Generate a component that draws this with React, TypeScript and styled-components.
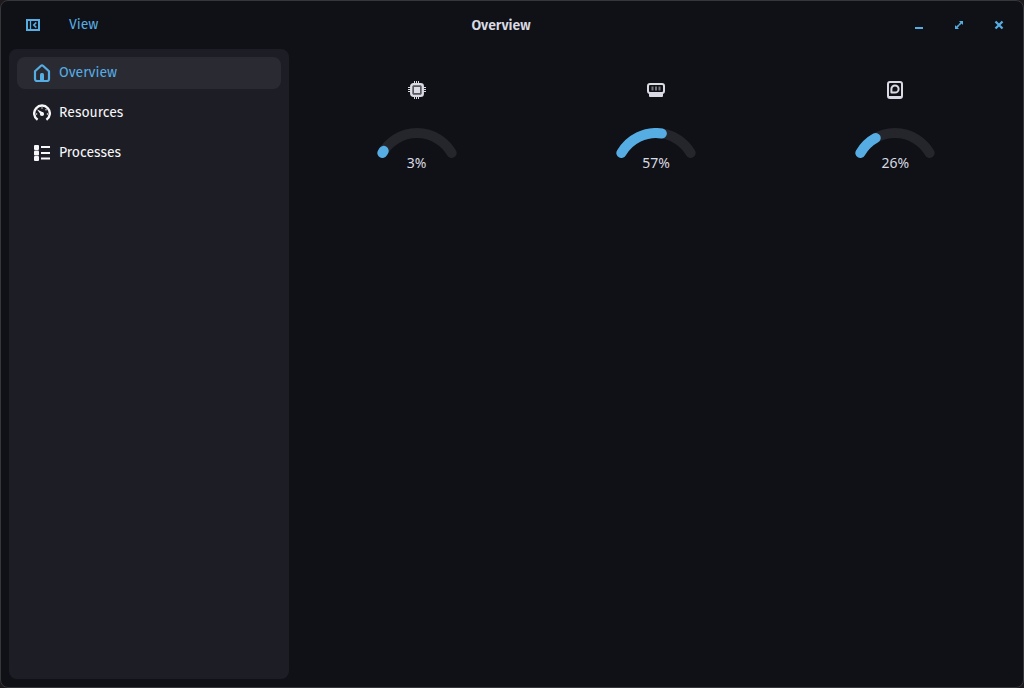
import React from "react";
import styled, { createGlobalStyle } from "styled-components";

const color = {
  accent: "#56ade3",
  window: "#101116",
  border: "#36373a",
  panel: "#1d1d25",
  active: "#2a2a33",
  track: "#25262b",
  text: "#d9dae3",
  bright: "#f7f7fa",
};

const GlobalStyle = createGlobalStyle`
  * { box-sizing: border-box; }
  html, body { margin: 0; background: #1c1a1d; }
  body { font: 14px/20px "Fira Sans", "Noto Sans", sans-serif; color: ${color.text}; }
  button { font: inherit; color: inherit; border: 0; padding: 0; background: none; cursor: pointer; }
  svg { display: block; }
`;

const Window = styled.div`
  min-height: 100vh;
  display: flex;
  flex-direction: column;
  background: ${color.window};
  border: 1px solid ${color.border};
  border-radius: 8px;
`;

const HeaderBar = styled.header`
  height: 48px;
  padding: 0 8px;
  display: grid;
  grid-template-columns: 1fr auto 1fr;
  align-items: center;
`;

const HeaderGroup = styled.div<{ $end?: boolean }>`
  display: flex;
  align-items: center;
  gap: 8px;
  color: ${color.accent};
  justify-content: ${(p) => (p.$end ? "flex-end" : "flex-start")};
`;

const Title = styled.h1`
  margin: 0;
  padding: 2px 22px 0 0;
  font-size: 14px;
  line-height: 20px;
  font-weight: 600;
`;

const HeaderButton = styled.button<{ $wide?: boolean }>`
  width: ${(p) => (p.$wide ? "48px" : "32px")};
  height: 32px;
  display: flex;
  align-items: center;
  justify-content: center;
`;

const MenuButton = styled.button`
  height: 32px;
  padding: 0 4px;
`;

const Body = styled.div`
  flex: 1;
  display: flex;
  gap: 8px;
  padding: 0 8px 8px;
`;

const Sidebar = styled.nav`
  width: 280px;
  flex-shrink: 0;
  display: flex;
  flex-direction: column;
  gap: 8px;
  padding: 8px;
  background: ${color.panel};
  border-radius: 8px;
`;

const NavItem = styled.button<{ $active?: boolean }>`
  && {
    height: 32px;
    padding: 0 16px;
    display: flex;
    align-items: center;
    gap: 8px;
    border-radius: 8px;
    color: ${(p) => (p.$active ? color.accent : color.bright)};
    background: ${(p) => (p.$active ? color.active : "transparent")};
  }
`;

const Gauges = styled.main`
  flex: 1;
  display: grid;
  grid-template-columns: repeat(3, 1fr);
  align-content: start;
  padding-top: 32px;
`;

const GaugeCell = styled.section`
  display: flex;
  flex-direction: column;
  align-items: center;
`;

const Dial = styled.svg`
  margin-top: 29px;
`;

const GaugeValue = styled.span`
  margin-top: -7px;
  font-family: "Noto Sans", sans-serif;
`;

const RADIUS = 40;

function pointAt(fraction: number) {
  const angle = ((-60 + 120 * fraction) * Math.PI) / 180;
  return `${40 + RADIUS * Math.sin(angle)} ${45 - RADIUS * Math.cos(angle)}`;
}

function arc(fraction: number) {
  return `M${pointAt(0)}A${RADIUS} ${RADIUS} 0 0 1 ${pointAt(fraction)}`;
}

function Gauge({ name, value, icon }: { name: string; value: number; icon: React.ReactNode }) {
  return (
    <GaugeCell aria-label={name}>
      {icon}
      <Dial width="80" height="32" viewBox="0 0 80 32" fill="none" strokeWidth="10" strokeLinecap="round" aria-hidden>
        <path d={arc(1)} stroke={color.track} />
        <path d={arc(value / 100)} stroke={color.accent} />
      </Dial>
      <GaugeValue>{value}%</GaugeValue>
    </GaugeCell>
  );
}

const SidebarIcon = () => (
  <svg width="16" height="16" viewBox="0 0 16 16" fill="none" stroke="currentColor" aria-hidden>
    <path d="M2 3h12v10H2z" strokeWidth="2" />
    <path d="M5.500 3v10" strokeWidth="1.300" />
    <path d="M11.300 5.500L8.800 8l2.500 2.500" strokeWidth="1.700" />
  </svg>
);

const MinimizeIcon = () => (
  <svg width="16" height="16" viewBox="0 0 16 16" fill="currentColor" aria-hidden>
    <path d="M4 10h8v2H4z" />
  </svg>
);

const MaximizeIcon = () => (
  <svg width="16" height="16" viewBox="0 0 16 16" fill="currentColor" aria-hidden>
    <path d="M8 4h4v4l-1.400-1.400-1.900 1.900-1.200-1.200 1.900-1.900zM8 12H4V8l1.400 1.400 1.900-1.900 1.200 1.200-1.900 1.900z" />
  </svg>
);

const CloseIcon = () => (
  <svg width="16" height="16" viewBox="0 0 16 16" stroke="currentColor" strokeWidth="2.300" aria-hidden>
    <path d="M4.500 4.500l7 7M11.500 4.500l-7 7" />
  </svg>
);

const HomeIcon = () => (
  <svg width="18" height="18" viewBox="0 0 18 18" aria-hidden>
    <path d="M2 7.200L8 1.800a1.500 1.500 0 0 1 2 0L16 7.200V15a2 2 0 0 1-2 2H4a2 2 0 0 1-2-2z" fill="none" stroke="currentColor" strokeWidth="2.200" strokeLinejoin="round" />
    <path d="M7 17v-6.500a1.500 1.500 0 0 1 1.500-1.500h1a1.500 1.500 0 0 1 1.500 1.500V17z" fill="currentColor" />
  </svg>
);

const SpeedIcon = () => (
  <svg width="18" height="18" viewBox="0 0 18 18" aria-hidden>
    <path d="M4.600 15.800A7.800 7.800 0 1 1 13.400 15.800" fill="none" stroke="currentColor" strokeWidth="2.400" />
    <circle cx="9" cy="10" r="2.100" fill="currentColor" />
    <path d="M3.800 5.200L10.200 8.600l-2 2.400z" fill="currentColor" />
    <g fill="currentColor">
      <circle cx="9" cy="4" r=".7" />
      <circle cx="13" cy="5.800" r=".7" />
      <circle cx="14.400" cy="10" r=".7" />
      <circle cx="3.600" cy="10" r=".7" />
    </g>
  </svg>
);

const ListIcon = () => (
  <svg width="18" height="18" viewBox="0 0 18 18" fill="currentColor" aria-hidden>
    <rect x="1" y="1" width="5" height="5" rx="1" />
    <rect x="1" y="6.500" width="5" height="5" rx="1" />
    <rect x="1" y="12" width="5" height="5" rx="1" />
    <path d="M8 2h9v2H8zM8 8h9v2H8zM8 13.500h9v2H8z" />
  </svg>
);

const CpuIcon = () => (
  <svg width="18" height="18" viewBox="0 0 18 18" aria-hidden>
    <path d="M6.500 0v3M8.500 0v3M10.500 0v3M6.500 15v3M8.500 15v3M10.500 15v3M0 6.500h3M0 8.500h3M0 10.500h3M15 6.500h3M15 8.500h3M15 10.500h3" stroke="currentColor" />
    <rect x="3.300" y="3.300" width="11.400" height="11.400" rx="2" fill="none" stroke="currentColor" strokeWidth="2.500" />
    <rect x="5.500" y="5.500" width="7" height="7" fill="none" stroke="currentColor" opacity=".35" />
    <rect x="6" y="6" width="6" height="6" fill="currentColor" />
  </svg>
);

const MemoryIcon = () => (
  <svg width="18" height="18" viewBox="0 0 18 18" aria-hidden>
    <rect x="1" y="3" width="16" height="9" rx="2" fill="none" stroke="currentColor" strokeWidth="2" />
    <path d="M5.500 5.500v4M9 5.500v4M12.500 5.500v4" stroke="currentColor" strokeWidth="2" opacity=".5" />
    <path d="M2 12h14v3a1 1 0 0 1-1 1H3a1 1 0 0 1-1-1z" fill="currentColor" />
  </svg>
);

const DiskIcon = () => (
  <svg width="18" height="18" viewBox="0 0 18 18" fill="none" stroke="currentColor" aria-hidden>
    <rect x="2" y="1" width="14" height="16" rx="2" strokeWidth="2" />
    <path d="M5.400 11.600V8A3.600 3.600 0 1 1 9 11.600z" strokeWidth="2" strokeLinejoin="round" />
    <path d="M3 15.500h12" strokeWidth="1" />
  </svg>
);

const pages = [
  { name: "Overview", icon: <HomeIcon /> },
  { name: "Resources", icon: <SpeedIcon /> },
  { name: "Processes", icon: <ListIcon /> },
];

export default function App() {
  const [page, setPage] = React.useState("Overview");
  return (
    <>
      <GlobalStyle />
      <Window>
        <HeaderBar>
          <HeaderGroup>
            <HeaderButton $wide aria-label="Toggle sidebar"><SidebarIcon /></HeaderButton>
            <MenuButton>View</MenuButton>
          </HeaderGroup>
          <Title>{page}</Title>
          <HeaderGroup $end>
            <HeaderButton aria-label="Minimize"><MinimizeIcon /></HeaderButton>
            <HeaderButton aria-label="Maximize"><MaximizeIcon /></HeaderButton>
            <HeaderButton aria-label="Close"><CloseIcon /></HeaderButton>
          </HeaderGroup>
        </HeaderBar>
        <Body>
          <Sidebar>
            {pages.map((p) => (
              <NavItem key={p.name} $active={p.name === page} onClick={() => setPage(p.name)}>
                {p.icon}
                {p.name}
              </NavItem>
            ))}
          </Sidebar>
          <Gauges>
            <Gauge name="Processor" value={3} icon={<CpuIcon />} />
            <Gauge name="Memory" value={57} icon={<MemoryIcon />} />
            <Gauge name="Disk" value={26} icon={<DiskIcon />} />
          </Gauges>
        </Body>
      </Window>
    </>
  );
}
